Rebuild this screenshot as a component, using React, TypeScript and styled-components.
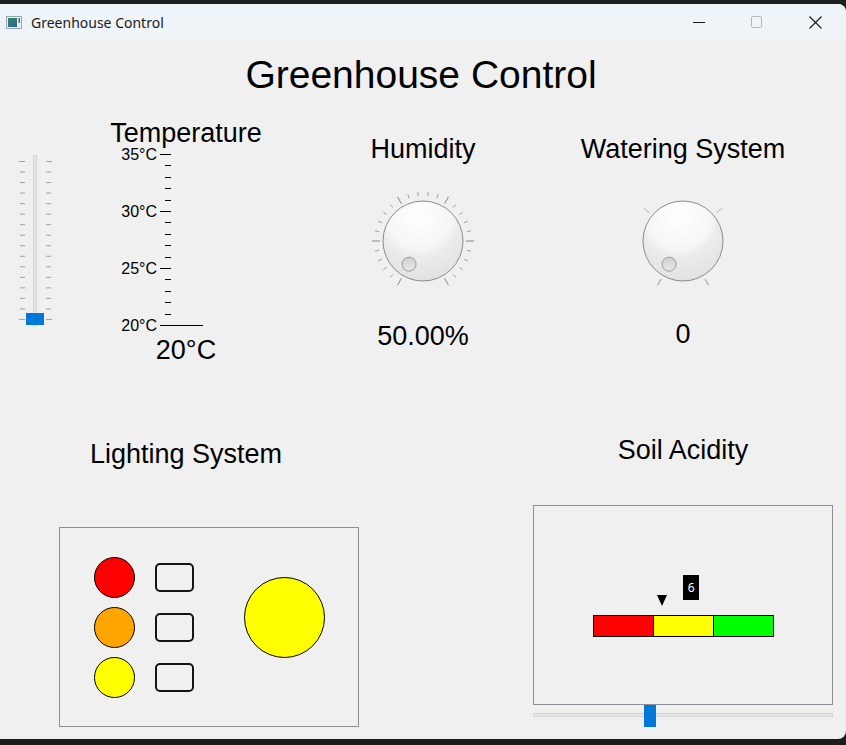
import React from "react";
import styled, { createGlobalStyle } from "styled-components";

const GlobalStyle = createGlobalStyle`
  html, body {
    margin: 0;
    padding: 0;
    background: #1c1c1c;
  }
  body {
    width: 846px;
    height: 745px;
    overflow: hidden;
    font-family: "Liberation Sans", Arial, sans-serif;
    color: #000;
  }
`;

const Screen = styled.div`
  width: 846px;
  height: 745px;
  display: flex;
  flex-direction: column;
  background: #1c1c1c;
`;

const BehindStrip = styled.div`
  flex: none;
  height: 4px;
  background: #202020;
`;

const Window = styled.div`
  flex: none;
  height: 735px;
  display: flex;
  flex-direction: column;
  background: #f0f0f0;
  border-radius: 0 8px 8px 0;
  overflow: hidden;
`;

const TitleBar = styled.div`
  flex: none;
  height: 36px;
  display: flex;
  align-items: center;
  background: #eff4f9;
`;

const AppIcon = styled.svg`
  margin-left: 6px;
  flex: none;
`;

const WindowTitle = styled.span`
  margin-left: 9px;
  font-family: "Noto Sans", "Open Sans", sans-serif;
  font-size: 14px;
  color: #1b1b1b;
  flex: 1;
`;

const CaptionButton = styled.div`
  width: 58px;
  height: 36px;
  display: grid;
  place-items: center;
`;

const Controls = styled.div`
  display: flex;
  margin-right: 2px;
`;

const Content = styled.div`
  flex: 1;
  display: flex;
  flex-direction: column;
`;

const MainTitle = styled.h1`
  margin: 0;
  padding: 13px 4px 0 0;
  font-size: 39px;
  line-height: 44px;
  font-weight: normal;
  text-align: center;
`;

const TopRow = styled.div`
  display: grid;
  grid-template-columns: 70px 232px 242px 278px;
  align-items: start;
`;

const Column = styled.div<{ $top: number }>`
  display: flex;
  flex-direction: column;
  align-items: center;
  padding-top: ${({ $top }) => $top}px;
`;

const SectionTitle = styled.div`
  font-size: 27px;
  line-height: 30px;
  white-space: nowrap;
`;

const ValueText = styled.div<{ $gap?: number }>`
  font-size: 27px;
  line-height: 30px;
  margin-top: ${({ $gap }) => $gap ?? 0}px;
`;

const ScaleFrame = styled.svg`
  display: block;
  margin-top: -4px;
`;

const DialFrame = styled.svg`
  margin-top: 16px;
  display: block;
`;

const BottomRow = styled.div`
  display: grid;
  grid-template-columns: 372px 300px;
  column-gap: 161px;
  align-items: start;
`;

const BottomColumn = styled.div<{ $top: number }>`
  display: flex;
  flex-direction: column;
  align-items: center;
  padding-top: ${({ $top }) => $top}px;
`;

const Panel = styled.div<{ $gap: number; $offset?: number }>`
  box-sizing: border-box;
  width: 300px;
  height: 200px;
  border: 1px solid #8b8e96;
  margin-top: ${({ $gap }) => $gap}px;
  align-self: flex-start;
  margin-left: ${({ $offset }) => $offset ?? 0}px;
`;

const LightingPanel = styled(Panel)`
  display: flex;
  align-items: flex-start;
  padding: 29px 0 0 34px;
`;

const LampGrid = styled.div`
  display: grid;
  grid-template-columns: 41px 39px;
  grid-auto-rows: 41px;
  column-gap: 20px;
  row-gap: 9px;
  align-items: center;
`;

const Lamp = styled.div<{ $color: string; $size: number }>`
  box-sizing: border-box;
  width: ${({ $size }) => $size}px;
  height: ${({ $size }) => $size}px;
  border-radius: 50%;
  border: 1px solid #000;
  background: ${({ $color }) => $color};
`;

const Switch = styled.div`
  box-sizing: border-box;
  width: 39px;
  height: 29px;
  border: 2px solid #141414;
  border-radius: 5px;
`;

const MainLamp = styled(Lamp)`
  margin: 20px 0 0 50px;
`;

const SoilPanel = styled(Panel)`
  display: flex;
  flex-direction: column;
  padding: 109px 0 0 59px;
`;

const BarWrap = styled.div`
  position: relative;
  width: 181px;
`;

const Bar = styled.div`
  box-sizing: border-box;
  width: 181px;
  height: 22px;
  display: flex;
  border: 1px solid #000;
`;

const Segment = styled.div<{ $color: string }>`
  flex: 1;
  background: ${({ $color }) => $color};
  & + & {
    border-left: 1px solid #000;
  }
`;

const Pointer = styled.div`
  position: absolute;
  top: -20px;
  width: 0;
  height: 0;
  border-left: 5.5px solid transparent;
  border-right: 5.5px solid transparent;
  border-top: 11px solid #000;
`;

const Badge = styled.div`
  position: absolute;
  top: -40px;
  width: 16px;
  height: 25px;
  background: #000;
  color: #fff;
  font-family: "Noto Sans", "DejaVu Sans", sans-serif;
  font-size: 12px;
  display: grid;
  place-items: center;
`;

const HSlider = styled.div`
  position: relative;
  width: 300px;
  height: 22px;
  align-self: flex-start;
`;

const HTrack = styled.div`
  box-sizing: border-box;
  margin-top: 8px;
  height: 4px;
  background: #e6e6e6;
  border: 1px solid #d6d6d6;
`;

const HHandle = styled.div`
  position: absolute;
  top: 0;
  width: 12px;
  height: 22px;
  background: #0078d7;
`;

const polar = (cx: number, cy: number, r: number, deg: number) => {
  const a = (deg * Math.PI) / 180;
  return [cx + r * Math.cos(a), cy - r * Math.sin(a)];
};

type Tick = { angle: number; inner: number; outer: number; color: string };

const Dial = ({ ticks, id }: { ticks: Tick[]; id: string }) => {
  const c = 61;
  const [ix, iy] = polar(c, c, 27, 239);
  return (
    <DialFrame width={122} height={122} viewBox="0 0 122 122">
      <defs>
        <radialGradient id={`${id}-knob`} cx="0.45" cy="0.2" r="0.9">
          <stop offset="0" stopColor="#ffffff" />
          <stop offset="0.45" stopColor="#f6f6f6" />
          <stop offset="0.55" stopColor="#ececec" />
          <stop offset="1" stopColor="#dedede" />
        </radialGradient>
        <linearGradient id={`${id}-dot`} x1="0" y1="0" x2="0" y2="1">
          <stop offset="0" stopColor="#cfcfcf" />
          <stop offset="1" stopColor="#e8e8e8" />
        </linearGradient>
      </defs>
      {ticks.map((t, i) => {
        const [x1, y1] = polar(c, c, t.inner, t.angle);
        const [x2, y2] = polar(c, c, t.outer, t.angle);
        return <line key={i} x1={x1} y1={y1} x2={x2} y2={y2} stroke={t.color} strokeWidth={1} />;
      })}
      <circle cx={c} cy={c} r={40} fill={`url(#${id}-knob)`} stroke="#8a8a8a" strokeWidth={1} />
      <circle cx={ix} cy={iy} r={7} fill={`url(#${id}-dot)`} stroke="#9a9a9a" strokeWidth={1} />
    </DialFrame>
  );
};

const humidityTicks: Tick[] = Array.from({ length: 26 }, (_, i) => {
  const major = i % 5 === 0;
  return {
    angle: 240 - i * 12,
    inner: major ? 43 : 45,
    outer: major ? 51 : 49,
    color: major ? "#858585" : "#9d9d9d",
  };
});

const wateringTicks: Tick[] = [240, 140, 40, -60].map((angle) => ({
  angle,
  inner: 44,
  outer: 51,
  color: angle === 240 || angle === -60 ? "#8f8f8f" : "#b4b4b4",
}));

const VSlider = () => {
  const ticks = Array.from({ length: 16 }, (_, i) => 161.5 + i * 10.53);
  return (
    <svg width={70} height={172} viewBox="0 155 70 172" style={{ display: "block" }}>
      <rect x={33.5} y={155.5} width={3} height={170} fill="#e6e6e6" stroke="#d4d4d4" />
      {ticks.map((y, i) => {
        const long = i === 0 || i === ticks.length - 1;
        return (
          <g key={i} stroke="#a0a092" strokeWidth={1}>
            <line x1={long ? 19 : 20} y1={y} x2={25} y2={y} />
            <line x1={46} y1={y} x2={long ? 52 : 51} y2={y} />
          </g>
        );
      })}
      <rect x={26} y={313} width={18} height={12} fill="#0078d7" />
    </svg>
  );
};

const TempScale = () => {
  const labels = [35, 30, 25, 20];
  const ticks = Array.from({ length: 15 }, (_, i) => 154 + i * 11.4);
  return (
    <ScaleFrame width={232} height={191} viewBox="70 144 232 191">
      {ticks.map((y, i) => (
        <line
          key={i}
          x1={i % 5 === 0 ? 160 : 165}
          y1={Math.round(y) + 0.5}
          x2={171}
          y2={Math.round(y) + 0.5}
          stroke="#000"
          strokeWidth={1}
        />
      ))}
      <line x1={160} y1={325.5} x2={203} y2={325.5} stroke="#000" strokeWidth={1.2} />
      {labels.map((v, i) => (
        <text
          key={v}
          x={157}
          y={159.5 + i * 57}
          textAnchor="end"
          fontFamily='"Liberation Sans", Arial, sans-serif'
          fontSize={16}
          fill="#000"
        >
          {v}°C
        </text>
      ))}
    </ScaleFrame>
  );
};

const soilValue = 6;
const soilMin = 1;
const soilMax = 14;

const App = () => {
  const frac = (soilValue - soilMin) / (soilMax - soilMin);
  const markerX = 180 * frac;
  return (
    <>
      <GlobalStyle />
      <Screen>
        <BehindStrip />
        <Window>
          <TitleBar>
            <AppIcon width={16} height={13} viewBox="0 0 16 13">
              <defs>
                <linearGradient id="ico" x1="0" y1="0" x2="1" y2="1">
                  <stop offset="0" stopColor="#2f8a5c" />
                  <stop offset="1" stopColor="#2f63a8" />
                </linearGradient>
              </defs>
              <rect x={0.5} y={0.5} width={15} height={12} fill="#e8eef4" stroke="#9aa6b2" />
              <rect x={2} y={2} width={9} height={9} fill="url(#ico)" />
              <rect x={12.5} y={2} width={1.5} height={5} fill="#4a6a8a" />
            </AppIcon>
            <WindowTitle>Greenhouse Control</WindowTitle>
            <Controls>
              <CaptionButton>
                <svg width={12} height={12} viewBox="0 0 12 12">
                  <line x1={0} y1={6.5} x2={12} y2={6.5} stroke="#1a1a1a" strokeWidth={1} />
                </svg>
              </CaptionButton>
              <CaptionButton>
                <svg width={12} height={12} viewBox="0 0 12 12">
                  <rect x={0.5} y={0.5} width={10} height={11} rx={1.5} fill="none" stroke="#b5b8bd" strokeWidth={1} />
                </svg>
              </CaptionButton>
              <CaptionButton>
                <svg width={13} height={13} viewBox="0 0 13 13">
                  <path d="M0.5 0.5 L12.5 12.5 M12.5 0.5 L0.5 12.5" stroke="#1a1a1a" strokeWidth={1.1} />
                </svg>
              </CaptionButton>
            </Controls>
          </TitleBar>
          <Content>
            <MainTitle>Greenhouse Control</MainTitle>
            <TopRow>
              <Column $top={58}>
                <VSlider />
              </Column>
              <Column $top={21}>
                <SectionTitle>Temperature</SectionTitle>
                <TempScale />
                <ValueText>20°C</ValueText>
              </Column>
              <Column $top={37}>
                <SectionTitle>Humidity</SectionTitle>
                <Dial ticks={humidityTicks} id="hum" />
                <ValueText $gap={19}>50.00%</ValueText>
              </Column>
              <Column $top={37}>
                <SectionTitle>Watering System</SectionTitle>
                <Dial ticks={wateringTicks} id="wat" />
                <ValueText $gap={17}>0</ValueText>
              </Column>
            </TopRow>
            <BottomRow>
              <BottomColumn $top={74}>
                <SectionTitle>Lighting System</SectionTitle>
                <LightingPanel $gap={58} $offset={59}>
                  <LampGrid>
                    <Lamp $color="#ff0000" $size={41} />
                    <Switch />
                    <Lamp $color="#ffa500" $size={41} />
                    <Switch />
                    <Lamp $color="#ffff00" $size={41} />
                    <Switch />
                  </LampGrid>
                  <MainLamp $color="#ffff00" $size={81} />
                </LightingPanel>
              </BottomColumn>
              <BottomColumn $top={70}>
                <SectionTitle>Soil Acidity</SectionTitle>
                <SoilPanel $gap={40}>
                  <BarWrap>
                    <Pointer style={{ left: markerX - 5.5 }} />
                    <Badge style={{ left: markerX + 21 }}>{soilValue}</Badge>
                    <Bar>
                      <Segment $color="#ff0000" />
                      <Segment $color="#ffff00" />
                      <Segment $color="#00ff00" />
                    </Bar>
                  </BarWrap>
                </SoilPanel>
                <HSlider>
                  <HTrack />
                  <HHandle style={{ left: (300 - 12) * frac }} />
                </HSlider>
              </BottomColumn>
            </BottomRow>
          </Content>
        </Window>
      </Screen>
    </>
  );
};

export default App;
